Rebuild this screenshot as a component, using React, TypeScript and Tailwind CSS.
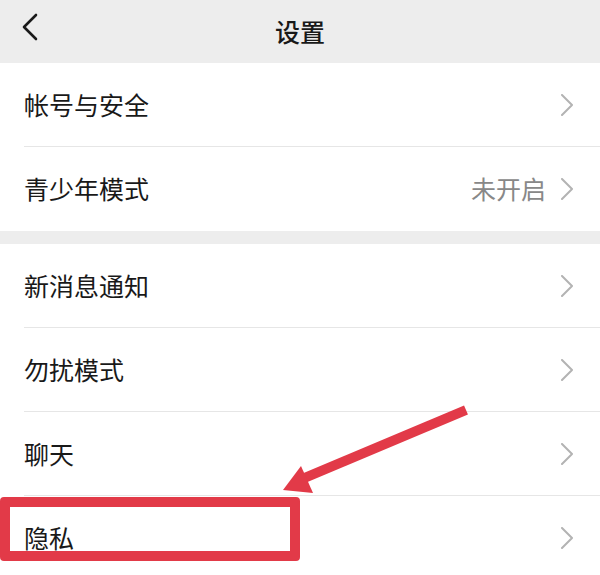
import React from "react";

interface Row {
  label: string;
  value?: string;
}

const groups: Row[][] = [
  [{ label: "帐号与安全" }, { label: "青少年模式", value: "未开启" }],
  [
    { label: "新消息通知" },
    { label: "勿扰模式" },
    { label: "聊天" },
    { label: "隐私" },
  ],
];

function Chevron() {
  return (
    <svg width="14" height="22" viewBox="0 0 14 22" fill="none">
      <polyline
        points="2,1 12,11 2,21"
        stroke="#b3b3b3"
        strokeWidth="2"
        strokeLinecap="round"
        strokeLinejoin="round"
      />
    </svg>
  );
}

function SettingRow({ row, last }: { row: Row; last: boolean }) {
  return (
    <div className="flex bg-white pl-6">
      <div
        className={`flex h-[84px] flex-1 items-center justify-between pr-[26px] ${
          last ? "" : "border-b border-[#e6e6e6]"
        }`}
      >
        <span className="text-[25px] text-[#191919]">{row.label}</span>
        <div className="flex items-center gap-[14px]">
          {row.value && (
            <span className="text-[25px] text-[#888888]">{row.value}</span>
          )}
          <Chevron />
        </div>
      </div>
    </div>
  );
}

export default function App() {
  return (
    <div
      className="relative h-[575px] w-[600px] overflow-hidden bg-[#ededed]"
      style={{ fontFamily: '"Noto Sans CJK SC", "Noto Sans", sans-serif' }}
    >
      <div className="relative flex h-[63px] items-center justify-center">
        <svg
          className="absolute left-[20px] top-[13px]"
          width="20"
          height="30"
          viewBox="0 0 20 30"
          fill="none"
        >
          <polyline
            points="16,2 4,14 16,26"
            stroke="#1a1a1a"
            strokeWidth="2.6"
            strokeLinecap="round"
            strokeLinejoin="round"
          />
        </svg>
        <span className="text-[25px] font-medium text-[#191919]">设置</span>
      </div>

      <div className="flex flex-col gap-[13px]">
        {groups.map((group, gi) => (
          <div key={gi} className="flex flex-col">
            {group.map((row, i) => (
              <SettingRow key={row.label} row={row} last={i === group.length - 1} />
            ))}
          </div>
        ))}
      </div>

      {/* highlight box and arrow */}
      <div className="absolute left-0 top-[497px] h-[64px] w-[300px] rounded-[4px] border-[10px] border-[#e23a48]" />
      <svg
        className="absolute left-0 top-0"
        width="600"
        height="575"
        viewBox="0 0 600 575"
        fill="none"
      >
        <line
          x1="466"
          y1="410"
          x2="302"
          y2="479"
          stroke="#e23a48"
          strokeWidth="10"
        />
        <polygon points="283,490 301,466 313,493" fill="#e23a48" />
      </svg>
    </div>
  );
}
